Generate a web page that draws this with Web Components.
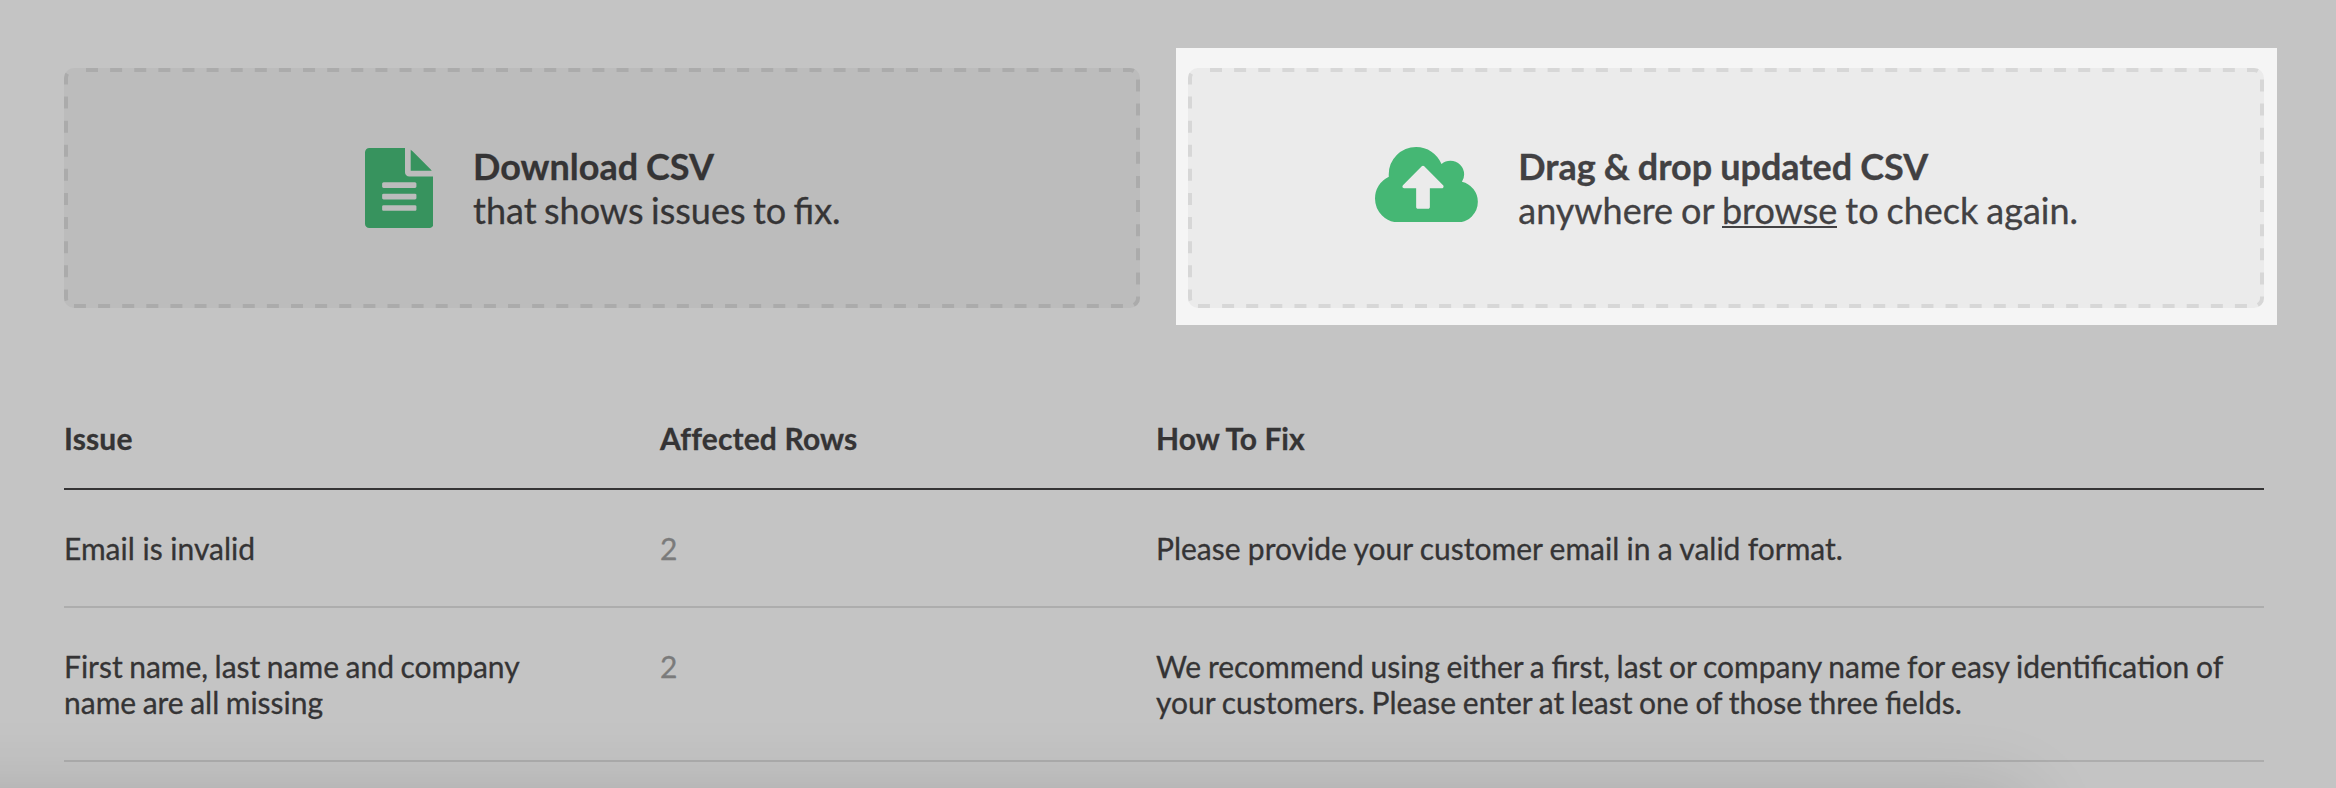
<!DOCTYPE html>
<html lang="en">
<head>
<meta charset="utf-8">
<title>CSV import issues</title>
<style>
  html, body { margin: 0; height: 788px; overflow: hidden; }
  body { background: #c4c4c4; color: #353435; font-family: Lato, "Open Sans", sans-serif; -webkit-text-stroke: .3px; }
  action-card strong { word-spacing: -.8px; }
</style>
</head>
<body>
<import-page>
  <action-card slot="actions" kind="download">
    <file-icon slot="icon"></file-icon>
    <strong>Download CSV</strong><br>that shows issues to fix.
  </action-card>
  <action-card slot="actions" kind="upload">
    <cloud-icon slot="icon"></cloud-icon>
    <strong>Drag &amp; drop updated CSV</strong><br>anywhere or <u>browse</u> to check again.
  </action-card>
  <issue-row head><span slot="issue">Issue</span><span slot="count">Affected Rows</span><span slot="fix">How To Fix</span></issue-row>
  <issue-row><span slot="issue">Email is invalid</span><span slot="count">2</span><span slot="fix">Please provide your customer email in a valid format.</span></issue-row>
  <issue-row long><span slot="issue">First name, last name and company name are all missing</span><span slot="count">2</span><span slot="fix">We recommend using either a first, last or company name for easy identification of your customers. Please enter at least one of those three fields.</span></issue-row>
</import-page>
<script>
const define = (name, html) => customElements.define(name, class extends HTMLElement {
  constructor() {
    super();
    const t = document.createElement('template');
    t.innerHTML = html;
    this.attachShadow({ mode: 'open' }).append(t.content.cloneNode(true));
  }
});

define('file-icon', `
  <style>:host{display:block;width:68.57px;height:80px;margin-bottom:1px;color:#37935e} svg{display:block;width:100%;height:100%}</style>
  <svg viewBox="128 0 1536 1792" fill="currentColor"><path d="M1596 476q14 14 28 36h-472v-472q22 14 36 28zm-476 164h544v1056q0 40-28 68t-68 28h-1344q-40 0-68-28t-28-68v-1600q0-40 28-68t68-28h800v544q0 40 28 68t68 28zm160 736v-64q0-14-9-23t-23-9h-704q-14 0-23 9t-9 23v64q0 14 9 23t23 9h704q14 0 23-9t9-23zm0-256v-64q0-14-9-23t-23-9h-704q-14 0-23 9t-9 23v64q0 14 9 23t23 9h704q14 0 23-9t9-23zm0-256v-64q0-14-9-23t-23-9h-704q-14 0-23 9t-9 23v64q0 14 9 23t23 9h704q14 0 23-9t9-23z"/></svg>`);

define('cloud-icon', `
  <style>:host{display:block;width:102.86px;height:75.43px;margin-bottom:7px;color:#45b774} svg{display:block;width:100%;height:100%}</style>
  <svg viewBox="0 128 1920 1408" fill="currentColor"><path d="M1280 864q0-14-9-23l-352-352q-9-9-23-9t-23 9l-351 351q-10 12-10 24 0 14 9 23t23 9h224v352q0 13 9.5 22.5t22.5 9.5h192q13 0 22.5-9.5t9.5-22.5v-352h224q13 0 22.5-9.5t9.5-22.5zm640 288q0 159-112.5 271.5t-271.5 112.5h-1088q-185 0-316.5-131.5t-131.5-316.5q0-130 70-240t188-165q-2-30-2-43 0-212 150-362t362-150q156 0 285.5 87t188.5 231q71-62 166-62 106 0 181 75t75 181q0 76-41 138 130 31 213.5 135.5t83.5 238.5z"/></svg>`);

define('action-card', `
  <style>
    :host{display:block;box-sizing:border-box;--fill:#bcbcbc;--dash:#ababab;--start:300.5px;--word:-1.8px;padding:20px 0 17px}
    :host([kind=upload]){--fill:#ebebeb;--dash:#d7d7d7;--start:187.4px;--word:-1.2px;background:#f5f5f5;color:#424143;padding:20px 13px 17px 12px}
    .card{position:relative;box-sizing:border-box;width:1076px;height:240px;border-radius:10px;overflow:hidden;background:var(--fill);
      display:flex;align-items:center;gap:40px;padding-left:var(--start)}
    .dashes{position:absolute;inset:0;width:100%;height:100%}
    .dashes rect{fill:none;stroke:var(--dash);stroke-width:8;stroke-dasharray:12 12.116;stroke-dashoffset:-12}
    .text{font-size:36px;line-height:44px;white-space:nowrap;word-spacing:var(--word)}
    ::slotted(u){text-decoration:none;border-bottom:2px solid;display:inline-block;line-height:32px}
  </style>
  <div class="card">
    <svg class="dashes"><rect width="1076" height="240" rx="10"/></svg>
    <slot name="icon"></slot>
    <div class="text"><slot></slot></div>
  </div>`);

define('issue-row', `
  <style>
    :host{display:grid;grid-template-columns:596px 496px 1fr;padding:40px 0;border-bottom:2px solid #adadad;font-size:30px;line-height:36px}
    :host([head]){padding:0 0 32px;border-color:#353435;font-weight:700}
    :host([head]) .issue,:host([head]) .count{letter-spacing:.15px}
    .issue{padding-right:80px}
    .count{color:#7b7b7b}
    .fix{word-spacing:-.4px}
    :host([head]) .fix{word-spacing:0}
    :host([long]) .issue{word-spacing:-1.2px}
    :host([long]) .fix{word-spacing:-1px}
    :host([head]) .count{color:inherit}
  </style>
  <div class="issue"><slot name="issue"></slot></div>
  <div class="count"><slot name="count"></slot></div>
  <div class="fix"><slot name="fix"></slot></div>`);

define('import-page', `
  <style>
    :host{display:block;position:relative;box-sizing:border-box;width:2336px;height:788px;overflow:hidden;padding-top:48px}
    .actions{display:flex;gap:36px;margin-left:64px}
    .table{margin:95px 72px 0 64px}
    .shade{position:absolute;left:-200px;top:800px;width:2222px;height:200px;box-shadow:0 0 80px rgba(0,0,0,.17);pointer-events:none}
  </style>
  <div class="actions"><slot name="actions"></slot></div>
  <div class="table"><slot></slot></div>
  <div class="shade"></div>`);
</script>
</body>
</html>
